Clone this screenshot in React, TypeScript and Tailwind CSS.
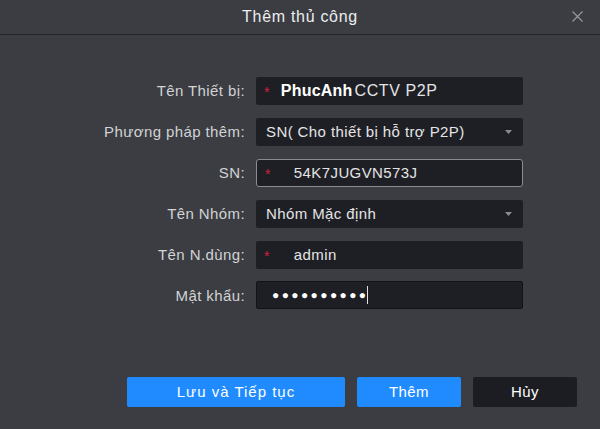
import React from 'react';

function Star() {
  return <span className="text-[#d0213a] text-[14px] leading-none mr-[11px] mt-[2px]">*</span>;
}

function Caret() {
  return (
    <svg width="7" height="4" viewBox="0 0 7 4" className="ml-auto">
      <path d="M0 0 L7 0 L3.5 4 Z" fill="#8a8c90" />
    </svg>
  );
}

function Row({ label, children }: { label: string; children: React.ReactNode }) {
  return (
    <div className="flex items-center h-[28px]">
      <div className="w-[245px] text-right text-[15px] tracking-[0.4px] text-[#d2d3d5]">{label}</div>
      <div className="ml-[11px] w-[267px] h-full">{children}</div>
    </div>
  );
}

export default function App() {
  const box = 'h-full w-full bg-[#1e1f24] rounded-[2px] flex items-center text-[15px] tracking-[0.4px] text-[#e4e4e6]';
  return (
    <div className="w-[600px] h-[429px] bg-[#3b3d42] font-['Liberation_Sans',Arial,sans-serif] flex flex-col">
      <div className="relative h-[35px] shrink-0 border-b border-[#242528] flex items-center justify-center">
        <span className="text-[16px] tracking-[0.7px] text-[#eceef0]">Thêm thủ công</span>
        <svg width="11" height="11" viewBox="0 0 11 11" className="absolute right-[17px] top-[11px]">
          <path d="M0.5 0.5 L10.5 10.5 M10.5 0.5 L0.5 10.5" stroke="#9a9ca0" strokeWidth="1.1" />
        </svg>
      </div>

      <div className="flex flex-col gap-[13px] pt-[42px]">
        <Row label="Tên Thiết bị:">
          <div className={box + ' pl-[8px]'}>
            <Star />
            <span className="text-[16px] font-bold text-white tracking-[0.2px]">PhucAnh</span>
            <span className="text-[16px] tracking-[0.6px] text-[#e4e4e6] ml-[2px]">CCTV P2P</span>
          </div>
        </Row>
        <Row label="Phương pháp thêm:">
          <div className={box + ' pl-[10px] pr-[11px]'}>
            <span>SN( Cho thiết bị hỗ trợ P2P)</span>
            <Caret />
          </div>
        </Row>
        <Row label="SN:">
          <div className={box + ' pl-[8px] border border-[#8a8c91] rounded-[3px]'}>
            <Star />
            <span className="ml-[12px]">54K7JUGVN573J</span>
          </div>
        </Row>
        <Row label="Tên Nhóm:">
          <div className={box + ' pl-[10px] pr-[11px]'}>
            <span>Nhóm Mặc định</span>
            <Caret />
          </div>
        </Row>
        <Row label="Tên N.dùng:">
          <div className={box + ' pl-[8px]'}>
            <Star />
            <span className="ml-[13px]">admin</span>
          </div>
        </Row>
        <Row label="Mật khẩu:">
          <div className={box + ' pl-[15px] border border-[#121316] h-[30px] -mt-[1px]'}>
            <span className="text-[12px] tracking-[2.4px] text-white">●●●●●●●●●●</span>
            <span className="w-[1px] h-[18px] bg-[#e0e0e0] -ml-[1px]" />
          </div>
        </Row>
      </div>

      <div className="flex gap-[12px] pl-[127px] mt-[67px]">
        <button className="w-[218px] h-[30px] bg-[#1f8bff] rounded-[2px] text-[15px] tracking-[1px] text-white">Lưu và Tiếp tục</button>
        <button className="w-[104px] h-[30px] bg-[#1f8bff] rounded-[2px] text-[15px] tracking-[0.4px] text-white">Thêm</button>
        <button className="w-[104px] h-[30px] bg-[#1c1d22] rounded-[2px] text-[15px] tracking-[0.4px] text-white">Hủy</button>
      </div>
    </div>
  );
}
